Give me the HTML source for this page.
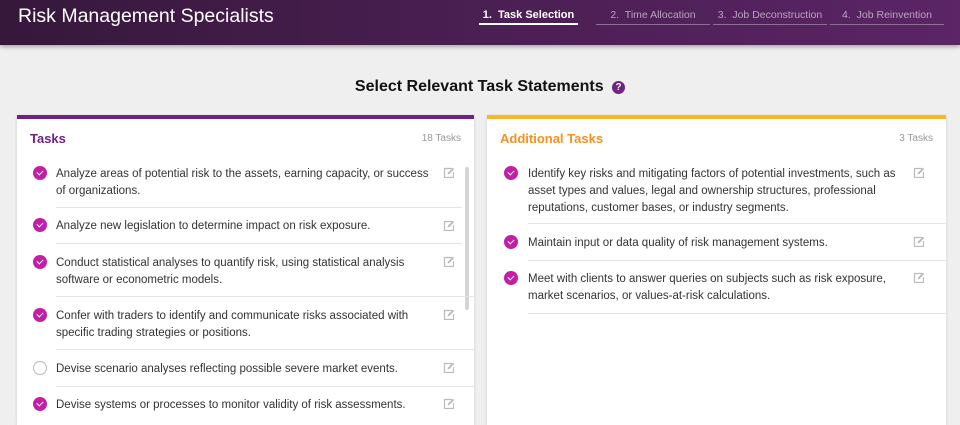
<!DOCTYPE html>
<html><head><style>
*{margin:0;padding:0;box-sizing:border-box}
body{width:960px;height:415px;overflow:hidden;background:#efefef;font-family:"Liberation Sans",Arial,sans-serif;position:relative}
.hdr{position:absolute;left:0;top:0;width:960px;height:45px;background:linear-gradient(90deg,#36183b,#4a1f52 50%,#5b2566);box-shadow:0 2px 4px rgba(0,0,0,.3)}
.hdr h1{position:absolute;left:18px;top:5px;font-weight:normal;color:#fff;font-size:19.5px}
.step{position:absolute;top:9px;font-size:10.5px;color:#b9a6bd;text-align:center;height:16px;border-bottom:1.5px solid #8d6f95;width:114px;white-space:nowrap}
.step.a{color:#fff;font-weight:bold;border-bottom:2px solid #fff}
.ttl{position:absolute;top:78px;left:0;width:960px;padding-left:20px;text-align:center;font-weight:bold;font-size:16px;color:#111}
.q{display:inline-block;width:13px;height:13px;border-radius:50%;background:#6f2283;color:#fff;font-size:10px;line-height:13px;vertical-align:1px;margin-left:4px}
.card{position:absolute;top:115px;background:#fff;height:310px;box-shadow:0 1px 3px rgba(0,0,0,.15)}
.card h2{position:absolute;left:13px;top:12px;font-size:13px}
.cnt{position:absolute;right:13px;top:14px;font-size:10px;color:#999}
.row{position:absolute;font-size:11.5px;line-height:17px;color:#333;margin-top:1px}
.chk{position:absolute;width:14px;height:14px;border-radius:50%;background:#c21fa6}
.chk:after{content:"";position:absolute;left:4px;top:3.5px;width:5px;height:3px;border-left:1.6px solid #fff;border-bottom:1.6px solid #fff;transform:rotate(-45deg)}
.emp{position:absolute;width:14px;height:14px;border-radius:50%;border:1px solid #bbb}
.ed{position:absolute;width:11px;height:11px}
.ln{position:absolute;height:1px;background:#e4e4e4}
</style></head><body>
<div class="hdr"><h1>Risk Management Specialists</h1>
<div class="step a" style="left:479px;width:99px;font-size:11px">1.&nbsp; Task Selection</div>
<div class="step" style="left:596px">2.&nbsp; Time Allocation</div>
<div class="step" style="left:713px">3.&nbsp; Job Deconstruction</div>
<div class="step" style="left:830px">4.&nbsp; Job Reinvention</div>
</div>
<div class="ttl">Select Relevant Task Statements <span class="q">?</span></div>

<div class="card" style="left:17px;width:457px;border-top:4px solid #6f2283">
<h2 style="color:#6f2283">Tasks</h2><div class="cnt">18 Tasks</div>
<div style="position:absolute;left:448px;top:48px;width:4px;height:143px;background:#d4d4d4;border-radius:2px"></div>
</div>
<div class="card" style="left:487px;width:459px;border-top:4px solid #fbb62a">
<h2 style="color:#f7901e">Additional Tasks</h2><div class="cnt">3 Tasks</div>
</div>

<svg width="0" height="0" style="position:absolute"><defs><g id="e"><path d="M9 1.5H1.5V10.5H10.5V5" fill="none" stroke="#bbb" stroke-width="1.2"/><path d="M4.5 7.5L5 5.5L10 0.8L11.2 2L6.3 7z" fill="#bbb"/></g></defs></svg>

<div class="chk" style="left:33px;top:166px"></div><div class="row" style="left:56px;top:165px;width:380px">Analyze areas of potential risk to the assets, earning capacity, or success of organizations.</div><svg class="ed" style="left:443px;top:167px"><use href="#e"/></svg>
<div class="ln" style="left:56px;top:207px;width:406px"></div>
<div class="chk" style="left:33px;top:218px"></div><div class="row" style="left:56px;top:217px;width:380px">Analyze new legislation to determine impact on risk exposure.</div><svg class="ed" style="left:443px;top:220px"><use href="#e"/></svg>
<div class="ln" style="left:56px;top:243px;width:406px"></div>
<div class="chk" style="left:33px;top:255px"></div><div class="row" style="left:56px;top:254px;width:380px">Conduct statistical analyses to quantify risk, using statistical analysis software or econometric models.</div><svg class="ed" style="left:443px;top:256px"><use href="#e"/></svg>
<div class="ln" style="left:56px;top:296px;width:418px"></div>
<div class="chk" style="left:33px;top:308px"></div><div class="row" style="left:56px;top:307px;width:380px">Confer with traders to identify and communicate risks associated with specific trading strategies or positions.</div><svg class="ed" style="left:443px;top:309px"><use href="#e"/></svg>
<div class="ln" style="left:56px;top:349px;width:418px"></div>
<div class="emp" style="left:33px;top:361px"></div><div class="row" style="left:56px;top:360px;width:380px">Devise scenario analyses reflecting possible severe market events.</div><svg class="ed" style="left:443px;top:362px"><use href="#e"/></svg>
<div class="ln" style="left:56px;top:386px;width:418px"></div>
<div class="chk" style="left:33px;top:397px"></div><div class="row" style="left:56px;top:396px;width:380px">Devise systems or processes to monitor validity of risk assessments.</div><svg class="ed" style="left:443px;top:398px"><use href="#e"/></svg>

<div class="chk" style="left:504px;top:166px"></div><div class="row" style="left:528px;top:165px;width:372px">Identify key risks and mitigating factors of potential investments, such as asset types and values, legal and ownership structures, professional reputations, customer bases, or industry segments.</div><svg class="ed" style="left:913px;top:167px"><use href="#e"/></svg>
<div class="ln" style="left:528px;top:223px;width:418px"></div>
<div class="chk" style="left:504px;top:235px"></div><div class="row" style="left:528px;top:234px;width:372px">Maintain input or data quality of risk management systems.</div><svg class="ed" style="left:913px;top:236px"><use href="#e"/></svg>
<div class="ln" style="left:528px;top:260px;width:418px"></div>
<div class="chk" style="left:504px;top:271px"></div><div class="row" style="left:528px;top:270px;width:372px">Meet with clients to answer queries on subjects such as risk exposure, market scenarios, or values-at-risk calculations.</div><svg class="ed" style="left:913px;top:272px"><use href="#e"/></svg>
<div class="ln" style="left:528px;top:313px;width:418px"></div>
</body></html>
